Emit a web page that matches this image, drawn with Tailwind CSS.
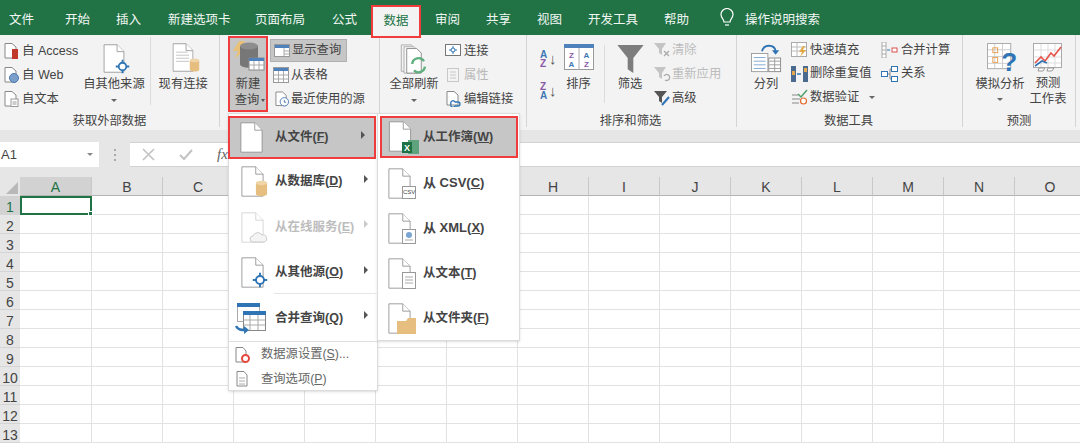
<!DOCTYPE html>
<html lang="zh">
<head>
<meta charset="UTF-8">
<title>Excel 数据</title>
<script src="https://cdn.jsdelivr.net/npm/@tailwindcss/browser@4"></script>
</head>
<body class="w-[1080px] h-[446px] overflow-hidden bg-white font-['Liberation_Sans','Noto_Sans_CJK_SC',sans-serif] text-[12.3px] text-[#444]">
<svg class="hidden">
  <symbol id="page" viewBox="0 0 28 38"><path d="M1 1H18L27 10V37H1Z" fill="#fff" stroke="#8a8a8a"/><path d="M18 1V10H27" fill="#fff" stroke="#8a8a8a"/></symbol>
  <symbol id="node" viewBox="0 0 20 20"><path d="M10 1V19M1 10H19" stroke="#2f75b5" stroke-width="2.4"/><circle cx="10" cy="10" r="5" fill="#fff" stroke="#2f75b5" stroke-width="2.4"/></symbol>
  <symbol id="cyl" viewBox="0 0 14 18"><path d="M1 3V15C1 18 13 18 13 15V3Z" fill="#e6bf80"/><ellipse cx="7" cy="3" rx="6" ry="2.4" fill="#f0d5a8"/></symbol>
</svg>

<!-- tabs -->
<nav class="h-[35px] bg-[#217346] flex items-start text-[#f2f7f4] text-[12.5px] pl-[9px] leading-[40px]">
  <span class="w-[56px]">文件</span>
  <span class="w-[51px]">开始</span>
  <span class="w-[52px]">插入</span>
  <span class="w-[87px]">新建选项卡</span>
  <span class="w-[77px]">页面布局</span>
  <span class="w-[40px]">公式</span>
  <span class="w-[50px] h-[33px] mt-[5px] bg-[#f3f3f3] border-2 border-[#f03c3c] text-[#217346] text-center leading-[28px] relative z-10 box-border -mr-[6px] -ml-[1px]">数据</span>
  <span class="w-[51px] ml-[20px]">审阅</span>
  <span class="w-[51px]">共享</span>
  <span class="w-[51px]">视图</span>
  <span class="w-[76px]">开发工具</span>
  <span class="w-[55px]">帮助</span>
  <span class="w-[26px] h-[35px] flex items-center">
    <svg width="16" height="20" viewBox="0 0 16 20" fill="none" stroke="#fff" stroke-width="1.2"><path d="M5 14C5 11 2 10 2 6.5A6 6 0 0 1 14 6.5C14 10 11 11 11 14Z"/><path d="M6 17H10"/></svg>
  </span>
  <span>操作说明搜索</span>
</nav>

<!-- ribbon -->
<section class="h-[95px] bg-[#f3f3f3] flex">
  <!-- 获取外部数据 -->
  <div class="w-[220px] h-[92px] border-r border-[#d4d4d4] flex flex-col">
    <div class="h-[76px] shrink-0 flex">
      <div class="w-[84px] pl-[4px] pt-[8px] flex flex-col gap-[8px]">
        <div class="h-[16px] flex items-center gap-[3px]">
          <svg width="15" height="16" viewBox="0 0 15 16"><path d="M1 .5H8L12 4V15H1Z" fill="#fff" stroke="#888"/><rect x="8" y="6" width="6" height="10" fill="#c0392b"/></svg>
          <span class="text-[12.5px] whitespace-nowrap">自 Access</span>
        </div>
        <div class="h-[16px] flex items-center gap-[3px]">
          <svg width="15" height="16" viewBox="0 0 15 16"><path d="M1 .5H8L12 4V15H1Z" fill="#fff" stroke="#888"/><circle cx="10" cy="11" r="4.5" fill="#7b9fca" stroke="#4a78b0"/></svg>
          <span class="text-[12.5px]">自 Web</span>
        </div>
        <div class="h-[16px] flex items-center gap-[3px]">
          <svg width="15" height="16" viewBox="0 0 15 16"><path d="M1 .5H8L12 4V15H1Z" fill="#fff" stroke="#888"/><rect x="7" y="8" width="7" height="7.5" fill="#fff" stroke="#999"/><path d="M8.5 11H12.5M8.5 13H12.5" stroke="#999"/></svg>
          <span>自文本</span>
        </div>
      </div>
      <div class="w-[68px] pr-[6px] flex flex-col items-center pt-[7px] border-r border-[#dcdcdc] h-[68px] mt-[2px]">
        <div class="relative w-[30px] h-[30px] translate-x-[4px] shrink-0">
          <svg class="w-[22px] h-[29px]"><use href="#page"/></svg>
          <svg class="absolute left-[12px] bottom-[0px] w-[15px] h-[15px]"><use href="#node"/></svg>
        </div>
        <span class="whitespace-nowrap leading-[16px] mt-[2px]">自其他来源</span>
        <span class="mt-[7px] w-0 h-0 border-x-[3px] border-x-transparent border-t-[3px] border-t-[#666]"></span>
      </div>
      <div class="w-[68px] pr-[4px] flex flex-col items-center pt-[8px]">
        <div class="relative w-[28px] h-[30px] translate-x-[3px] shrink-0">
          <svg class="w-[22px] h-[29px]" viewBox="0 0 28 38"><use href="#page"/><path d="M5 12H20M5 16H22M5 20H22M5 24H22" stroke="#b5b5b5"/></svg>
          <svg class="absolute right-0 bottom-0 w-[11px] h-[16px]"><use href="#cyl"/></svg>
        </div>
        <span class="whitespace-nowrap leading-[16px] mt-[3px]">现有连接</span>
      </div>
    </div>
    <div class="text-center leading-[16px] mt-[2px]">获取外部数据</div>
  </div>

  <!-- 获取和转换 -->
  <div class="w-[160px] h-[92px] border-r border-[#d4d4d4] flex pl-[8px] gap-[2px]">
    <div class="w-[40px] h-[76px] mt-[1px] bg-[#c6c6c6] border-2 border-[#f03c3c] flex flex-col items-center box-border">
      <svg class="mt-[2px] shrink-0" width="34" height="36" viewBox="0 0 34 36"><path d="M8 1H14L10 9H14L4 19L7 11H2Z" fill="#e8c078"/><path d="M9 6V24C9 29 27 29 27 24V6Z" fill="#777"/><ellipse cx="18" cy="6" rx="9" ry="3.5" fill="#8d8d8d"/><rect x="18" y="18" width="15" height="12" fill="#fff" stroke="#888"/><rect x="18" y="18" width="15" height="3" fill="#4f81bd"/><path d="M18 25H33M23 21V30M28 21V30" stroke="#aaa"/></svg>
      <span class="leading-[15px] mt-[1px]">新建</span>
      <span class="leading-[16px] whitespace-nowrap flex items-center gap-[2px] ml-[4px]">查询<span class="w-0 h-0 border-x-[2.5px] border-x-transparent border-t-[3px] border-t-[#555]"></span></span>
    </div>
    <div class="pt-[4px] flex flex-col">
      <div class="w-[77px] h-[23px] bg-[#c6c6c6] border border-[#b0b0b0] flex items-center gap-[2px] pl-[3px] whitespace-nowrap">
        <svg width="16" height="13" viewBox="0 0 16 13"><rect x=".5" y=".5" width="15" height="12" fill="#fff" stroke="#999"/><rect x="1" y="1" width="14" height="3" fill="#4f81bd"/><path d="M10 4V12M10 7H15M10 10H15" stroke="#aaa"/></svg>
        <span>显示查询</span>
      </div>
      <div class="h-[24px] mt-[1px] flex items-center gap-[2px] pl-[3px]">
        <svg width="16" height="16" viewBox="0 0 16 16"><rect x=".5" y=".5" width="15" height="15" fill="#fff" stroke="#999"/><rect x="1" y="1" width="14" height="3" fill="#4f81bd"/><path d="M1 8H15M1 12H15M5.5 4V15M10.5 4V15" stroke="#aaa"/></svg>
        <span>从表格</span>
      </div>
      <div class="h-[24px] flex items-center gap-[2px] pl-[5px] whitespace-nowrap">
        <svg width="14" height="16" viewBox="0 0 15 16"><path d="M1 .5H8L12 4V15H1Z" fill="#fff" stroke="#888"/><circle cx="10" cy="11" r="4.5" fill="#fff" stroke="#4a78b0"/><path d="M10 9V11.5H12" fill="none" stroke="#4a78b0"/></svg>
        <span>最近使用的源</span>
      </div>
    </div>
  </div>

  <!-- 连接 -->
  <div class="w-[147px] h-[92px] border-r border-[#d4d4d4] flex pt-[8px]">
    <div class="w-[66px] pl-[2px] flex flex-col items-center">
      <svg class="shrink-0 mt-[1px]" width="32" height="30" viewBox="0 0 34 33"><path d="M3 1H14L18 5V30H3Z" fill="#f2f2f2" stroke="#aaa"/><path d="M6 3H17L21 7V32H6Z" fill="#f8f8f8" stroke="#aaa"/><path d="M9 5H20L25 10V32H9Z" fill="#fff" stroke="#888"/><path d="M15 22A7 7 0 0 1 28 19M29 25A7 7 0 0 1 17 29" fill="none" stroke="#5fae7e" stroke-width="2.6"/></svg>
      <span class="leading-[16px] mt-[2px] whitespace-nowrap">全部刷新</span>
      <span class="mt-[7px] w-0 h-0 border-x-[3px] border-x-transparent border-t-[3px] border-t-[#666]"></span>
    </div>
    <div class="flex flex-col gap-[8px] -ml-[1px]">
      <div class="h-[16px] flex items-center gap-[3px]">
        <svg width="16" height="14" viewBox="0 0 16 14"><rect x=".5" y=".5" width="15" height="11" fill="#fff" stroke="#777"/><path d="M8 2V10M4 6H12" stroke="#2f75b5"/><circle cx="8" cy="6" r="2" fill="#fff" stroke="#2f75b5"/></svg>
        <span>连接</span>
      </div>
      <div class="h-[16px] flex items-center gap-[3px] text-[#b8b8b8]">
        <svg width="16" height="16" viewBox="0 0 16 16" fill="none" stroke="#c8c8c8"><rect x="2.5" y="1.5" width="11" height="13"/><path d="M5 5H11M5 8H11M5 11H11"/></svg>
        <span>属性</span>
      </div>
      <div class="h-[16px] flex items-center gap-[3px] whitespace-nowrap">
        <svg width="16" height="16" viewBox="0 0 16 16"><path d="M2 .5H9L13 4V14H2Z" fill="#fff" stroke="#888"/><path d="M6 13A2 2 0 0 1 10 11H13A2 2 0 0 1 13 15H10A2 2 0 0 1 6 13Z" fill="none" stroke="#2f75b5" stroke-width="1.3"/></svg>
        <span>编辑链接</span>
      </div>
    </div>
  </div>

  <!-- 排序和筛选 -->
  <div class="w-[210px] h-[92px] border-r border-[#d4d4d4] flex flex-col">
    <div class="h-[76px] shrink-0 flex pt-[8px]">
      <div class="w-[36px] pl-[13px] pt-[7px] flex flex-col gap-[14px] shrink-0 text-[10px] font-bold leading-[9px]">
        <span class="relative text-[#3f78b5]">A<br><span class="text-[#8a5aa8]">Z</span><span class="absolute left-[9px] top-0 font-normal text-[#555] text-[15px] leading-[18px]">↓</span></span>
        <span class="relative text-[#8a5aa8]">Z<br><span class="text-[#3f78b5]">A</span><span class="absolute left-[9px] top-0 font-normal text-[#555] text-[15px] leading-[18px]">↓</span></span>
      </div>
      <div class="w-[31px] flex flex-col items-center shrink-0">
        <svg width="30" height="27" viewBox="0 0 30 27" class="shrink-0 mt-[1px]"><rect x=".5" y=".5" width="29" height="25" fill="#fff" stroke="#999"/><rect x="0" y="0" width="30" height="4" fill="#4f81bd"/><path d="M15 4V26" stroke="#aaa"/><text x="7.5" y="14" text-anchor="middle" font-size="8" font-weight="700" fill="#8a5aa8">Z</text><text x="7.5" y="23" text-anchor="middle" font-size="8" font-weight="700" fill="#3f78b5">A</text><text x="22.5" y="14" text-anchor="middle" font-size="8" font-weight="700" fill="#3f78b5">A</text><text x="22.5" y="23" text-anchor="middle" font-size="8" font-weight="700" fill="#8a5aa8">Z</text></svg>
        <span class="leading-[16px] mt-[5px] whitespace-nowrap">排序</span>
      </div>
      <div class="w-px h-[58px] bg-[#dcdcdc] ml-[10px] mt-[2px] shrink-0"></div>
      <div class="w-[50px] flex flex-col items-center shrink-0">
        <svg width="29" height="30" viewBox="0 0 30 32" class="mt-[1px] shrink-0"><path d="M1 1H29L18 15V31L12 27V15Z" fill="#7d7d7d"/></svg>
        <span class="leading-[16px] mt-[2px] whitespace-nowrap">筛选</span>
      </div>
      <div class="flex flex-col gap-[8px] whitespace-nowrap -mt-[1px] -ml-[2px]">
        <div class="h-[16px] flex items-center gap-[1px] text-[#bcbcbc]">
          <svg width="18" height="16" viewBox="0 0 18 16"><path d="M1 1H13L9 7V13L6 11V7Z" fill="#c4c4c4"/><path d="M11 9L16 14M16 9L11 14" stroke="#aaa" stroke-width="1.3"/></svg>
          <span>清除</span>
        </div>
        <div class="h-[16px] flex items-center gap-[1px] text-[#bcbcbc]">
          <svg width="18" height="16" viewBox="0 0 18 16"><path d="M1 1H13L9 7V13L6 11V7Z" fill="#c4c4c4"/><path d="M11 10A3 3 0 1 1 12 14" fill="none" stroke="#aaa" stroke-width="1.3"/></svg>
          <span>重新应用</span>
        </div>
        <div class="h-[16px] flex items-center gap-[1px]">
          <svg width="18" height="16" viewBox="0 0 18 16"><path d="M1 1H14L9 7V13L6 11V7Z" fill="#555"/><path d="M9 15L16 7" stroke="#2f75b5" stroke-width="2"/></svg>
          <span>高级</span>
        </div>
      </div>
    </div>
    <div class="text-center leading-[16px] mt-[2px] -translate-x-[1px]">排序和筛选</div>
  </div>

  <!-- 数据工具 -->
  <div class="w-[226px] h-[92px] border-r border-[#d4d4d4] flex flex-col">
    <div class="h-[76px] shrink-0 flex pt-[8px]">
      <div class="w-[52px] flex flex-col items-center shrink-0 pl-[6px]">
        <svg width="33" height="30" viewBox="0 0 34 33" class="shrink-0"><path d="M12 9C14 1 26 1 27 9" fill="none" stroke="#2f75b5" stroke-width="2"/><path d="M23 8L27 13L31 8Z" fill="#2f75b5"/><rect x=".5" y="11.5" width="18" height="20" fill="#fff" stroke="#999"/><path d="M3 16H16M3 20H16M3 24H16M3 28H16" stroke="#7aa5d2"/><rect x="19.5" y="16.5" width="13" height="15" fill="#fff" stroke="#888"/><path d="M20 20H32M20 24H32M20 28H32M26 17V31" stroke="#999"/></svg>
        <span class="leading-[16px] mt-[3px] whitespace-nowrap">分列</span>
      </div>
      <div class="w-[90px] flex flex-col gap-[7.5px] whitespace-nowrap shrink-0 -mt-[1px] ml-[2px]">
        <div class="h-[16px] flex items-center gap-[2px]">
          <svg width="17" height="16" viewBox="0 0 17 16"><rect x=".5" y=".5" width="15" height="14" fill="#fff" stroke="#aaa"/><path d="M1 5H15M1 9H15M6 1V14" stroke="#bbb"/><path d="M12 4L8 10H11L9 15L15 8H12L14 4Z" fill="#e0a945"/></svg>
          <span>快速填充</span>
        </div>
        <div class="h-[16px] flex items-center gap-[2px]">
          <svg width="17" height="16" viewBox="0 0 17 16"><rect x="0" y="0" width="5" height="16" fill="#4a6a8f"/><rect x="1" y="5" width="3" height="4" fill="#e6a84c"/><rect x="12" y="0" width="5" height="16" fill="#4a6a8f"/><rect x="13" y="2" width="3" height="4" fill="#e6a84c"/><path d="M6 8H10" stroke="#2f75b5" stroke-width="1.5"/></svg>
          <span>删除重复值</span>
        </div>
        <div class="h-[16px] flex items-center gap-[2px]">
          <svg width="17" height="16" viewBox="0 0 17 16"><path d="M7 5L10 8L16 1" fill="none" stroke="#4fa06a" stroke-width="1.5"/><path d="M1 6H7M1 10H9M1 14H8" stroke="#888"/><circle cx="12.5" cy="12" r="3" fill="#fff" stroke="#e26a2c" stroke-width="1.2"/></svg>
          <span>数据验证</span>
          <span class="ml-[8px] w-0 h-0 border-x-[3px] border-x-transparent border-t-[3px] border-t-[#666]"></span>
        </div>
      </div>
      <div class="flex flex-col gap-[7.5px] whitespace-nowrap -mt-[1px]">
        <div class="h-[16px] flex items-center gap-[3px]">
          <svg width="17" height="16" viewBox="0 0 17 16"><rect x="1" y="0" width="4" height="16" fill="#fff" stroke="#999" stroke-width=".8"/><path d="M1 4H5M1 8H5M1 12H5" stroke="#999" stroke-width=".8"/><path d="M6 8H9" stroke="#2f75b5"/><rect x="11" y="6" width="5" height="4" fill="#fff" stroke="#d9534f"/></svg>
          <span>合并计算</span>
        </div>
        <div class="h-[16px] flex items-center gap-[3px]">
          <svg width="17" height="16" viewBox="0 0 17 16" fill="#fff" stroke="#2f75b5"><rect x=".5" y="5.5" width="6" height="5"/><rect x="10.5" y=".5" width="6" height="5"/><rect x="10.5" y="10.5" width="6" height="5"/><path d="M7 8H9M9 3V13M9 3H10M9 13H10" fill="none" stroke="#888"/></svg>
          <span>关系</span>
        </div>
      </div>
    </div>
    <div class="text-center leading-[16px] mt-[2px] -translate-x-[1px]">数据工具</div>
  </div>

  <!-- 预测 -->
  <div class="w-[113px] h-[92px] border-r border-[#d4d4d4] flex flex-col">
    <div class="h-[76px] shrink-0 flex pt-[8px]">
      <div class="w-[60px] ml-[7px] flex flex-col items-center shrink-0">
        <svg width="31" height="30" viewBox="0 0 32 31" class="shrink-0 translate-x-[2px] overflow-visible"><rect x=".5" y=".5" width="24" height="26" fill="#fff" stroke="#aaa"/><path d="M1 7H24M1 14H24M1 21H24M8 1V26M16 1V26" stroke="#ccc"/><rect x="6" y="5" width="5" height="5" fill="none" stroke="#e8a050"/><rect x="6" y="15" width="5" height="5" fill="none" stroke="#e8a050"/><text x="23" y="29" text-anchor="middle" font-size="27" font-weight="700" font-family="Liberation Sans" fill="#2f75b5">?</text></svg>
        <span class="leading-[16px] mt-[3px] whitespace-nowrap">模拟分析</span>
        <span class="mt-[6px] w-0 h-0 border-x-[3px] border-x-transparent border-t-[3px] border-t-[#666]"></span>
      </div>
      <div class="w-[36px] flex flex-col items-center shrink-0">
        <svg width="30" height="30" viewBox="0 0 30 30" class="shrink-0"><rect x=".5" y=".5" width="28" height="24" fill="#fff" stroke="#aaa"/><path d="M1 7H28M1 14H28M1 20H28M8 1V24M15 1V24M22 1V24" stroke="#ddd"/><path d="M2 20L8 14L12 18L18 10L21 13L28 4" fill="none" stroke="#e5534b" stroke-width="1.6"/><path d="M2 23L9 18L14 20" fill="none" stroke="#2f75b5" stroke-width="1.6"/><path d="M6 25H12L10 28H5ZM15 25H21L19 28H14Z" fill="#fff" stroke="#999"/></svg>
        <span class="leading-[15px] mt-[3px] whitespace-nowrap">预测</span>
        <span class="leading-[16px] whitespace-nowrap">工作表</span>
      </div>
    </div>
    <div class="text-center leading-[16px] mt-[2px]">预测</div>
  </div>
</section>

<!-- formula bar -->
<section class="h-[47px] bg-[#e6e6e6] pt-[12px] flex items-start">
  <div class="w-[99px] h-[25px] bg-white flex items-center justify-between pl-[1px] pr-[6px] text-[13px]">
    <span>A1</span>
    <span class="w-0 h-0 border-x-[3px] border-x-transparent border-t-[3px] border-t-[#888]"></span>
  </div>
  <div class="w-[31px] h-[25px] flex flex-col items-center justify-center gap-[3px]">
    <span class="size-[2px] bg-[#aaa]"></span><span class="size-[2px] bg-[#aaa]"></span><span class="size-[2px] bg-[#aaa]"></span>
  </div>
  <div class="flex-1 h-[25px] bg-white border-y border-[#d2d2d2] flex items-center pl-[12px] gap-[24px]">
    <svg width="13" height="13" viewBox="0 0 13 13" stroke="#c2c2c2" stroke-width="1.6"><path d="M1 1L12 12M12 1L1 12"/></svg>
    <svg width="14" height="12" viewBox="0 0 14 12" fill="none" stroke="#c2c2c2" stroke-width="2"><path d="M1 6L5 10L13 1"/></svg>
    <span class="font-['Liberation_Serif',serif] italic text-[15px] text-[#666]">fx</span>
  </div>
</section>

<!-- sheet -->
<section id="sheet" class="grid grid-cols-[20px_72px_repeat(14,71px)] grid-rows-[19px_repeat(13,19px)] relative"></section>

<!-- 新建查询 menu -->
<div class="absolute left-[228px] top-[113px] z-20 flex items-start">
  <div class="w-[150px] h-[278px] bg-white border border-[#dcdcdc] shadow-sm flex flex-col font-bold text-[12.5px]">
    <div class="h-[43px] shrink-0 mt-[2px] -ml-px w-[148px] bg-[#c6c6c6] border-2 border-[#f03c3c] flex items-center">
      <svg class="ml-[10px] w-[23px] h-[31px] shrink-0"><use href="#page"/></svg>
      <span class="ml-[12px] flex-1">从文件(<span class="underline">F</span>)</span>
      <span class="w-0 h-0 border-y-[4px] border-y-transparent border-l-[4px] border-l-[#555] mr-[9px] -mt-[6px]"></span>
    </div>
    <div class="h-[45.5px] shrink-0 flex items-center">
      <span class="relative ml-[12px] w-[27px] h-[31px] shrink-0"><svg class="w-[23px] h-[31px]"><use href="#page"/></svg><svg class="absolute right-0 bottom-0 w-[13px] h-[17px]"><use href="#cyl"/></svg></span>
      <span class="ml-[7px] flex-1">从数据库(<span class="underline">D</span>)</span>
      <span class="w-0 h-0 border-y-[4px] border-y-transparent border-l-[4px] border-l-[#555] mr-[9px] -mt-[6px]"></span>
    </div>
    <div class="h-[45.5px] shrink-0 flex items-center text-[#bdbdbd]">
      <span class="relative ml-[12px] w-[27px] h-[31px] shrink-0"><svg class="w-[23px] h-[31px] opacity-40"><use href="#page"/></svg><svg class="absolute right-0 bottom-0" width="19" height="12" viewBox="0 0 19 12"><path d="M4 11A3 3 0 0 1 4 5A5 5 0 0 1 13 4A3.5 3.5 0 0 1 15 11Z" fill="#f4f4f4" stroke="#ccc"/></svg></span>
      <span class="ml-[7px] flex-1">从在线服务(<span class="underline">E</span>)</span>
      <span class="w-0 h-0 border-y-[4px] border-y-transparent border-l-[4px] border-l-[#ccc] mr-[9px] -mt-[6px]"></span>
    </div>
    <div class="h-[45.5px] shrink-0 flex items-center">
      <span class="relative ml-[12px] w-[27px] h-[31px] shrink-0"><svg class="w-[23px] h-[31px]"><use href="#page"/></svg><svg class="absolute right-0 bottom-0 w-[16px] h-[16px]"><use href="#node"/></svg></span>
      <span class="ml-[7px] flex-1">从其他源(<span class="underline">O</span>)</span>
      <span class="w-0 h-0 border-y-[4px] border-y-transparent border-l-[4px] border-l-[#555] mr-[9px] -mt-[6px]"></span>
    </div>
    <div class="h-[45px] shrink-0 flex items-center relative">
      <span class="absolute left-[45px] right-0 -top-[3px] h-px bg-[#e6e6e6]"></span>
      <svg class="ml-[6px] shrink-0" width="32" height="32" viewBox="0 0 32 32"><rect x="2.5" y="1.5" width="22" height="18" fill="#fff" stroke="#aaa"/><rect x="2" y="1" width="23" height="4" fill="#2f75b5"/><rect x="8.5" y="9.5" width="22" height="19" fill="#fff" stroke="#888"/><rect x="8" y="9" width="23" height="4" fill="#2f75b5"/><path d="M9 18H30M9 23H30M15 13V28M23 13V28" stroke="#aaa"/><path d="M1 24C3 28 6 28 11 28" fill="none" stroke="#2f75b5" stroke-width="2.4"/><path d="M9 24L14 28L9 32Z" fill="#2f75b5"/></svg>
      <span class="ml-[8px] flex-1">合并查询(<span class="underline">Q</span>)</span>
      <span class="w-0 h-0 border-y-[4px] border-y-transparent border-l-[4px] border-l-[#555] mr-[9px] -mt-[6px]"></span>
    </div>
    <div class="border-t border-[#e0e0e0] pt-[1px] text-[#666] font-normal text-[12.3px]">
      <div class="h-[24px] flex items-center">
        <svg class="ml-[6px]" width="15" height="16" viewBox="0 0 15 16"><path d="M1 .5H8L11 4V15H1Z" fill="#fff" stroke="#888"/><circle cx="10.5" cy="11.5" r="3.5" fill="#fff" stroke="#e5483f" stroke-width="2"/></svg>
        <span class="ml-[11px] whitespace-nowrap">数据源设置(<span class="underline">S</span>)...</span>
      </div>
      <div class="h-[25px] flex items-center">
        <svg class="ml-[6px]" width="15" height="16" viewBox="0 0 15 16" fill="#fff" stroke="#888"><path d="M2 .5H9L12 4V15H2Z"/><path d="M4 7H10M4 10H10M4 13H10" stroke="#aaa"/></svg>
        <span class="ml-[11px] whitespace-nowrap">查询选项(<span class="underline">P</span>)</span>
      </div>
    </div>
  </div>

  <!-- 从文件 submenu -->
  <div class="w-[143px] h-[228px] -ml-px bg-white border border-[#dcdcdc] shadow-sm flex flex-col font-bold text-[12.5px]">
    <div class="h-[42px] shrink-0 mt-[2px] ml-[2px] w-[138px] bg-[#c6c6c6] border-2 border-[#f03c3c] flex items-center">
      <span class="relative ml-[6px] w-[31px] h-[33px] shrink-0"><svg class="w-[24px] h-[31px]"><use href="#page"/></svg><svg class="absolute right-0 bottom-0" width="17" height="14" viewBox="0 0 17 14"><rect x="6" y="0" width="11" height="14" fill="#5fa37e"/><rect x="0" y="2" width="10" height="11" fill="#1e7145"/><text x="5" y="11" text-anchor="middle" font-size="9" font-weight="700" fill="#fff" font-family="Liberation Sans">X</text></svg></span>
      <span class="ml-[4px] whitespace-nowrap">从工作簿(<span class="underline">W</span>)</span>
    </div>
    <div class="h-[45px] shrink-0 mt-[2.5px] flex items-center">
      <span class="relative ml-[10px] w-[28px] h-[31px] shrink-0"><svg class="w-[23px] h-[31px]"><use href="#page"/></svg><span class="absolute right-0 bottom-0 w-[14px] h-[13px] bg-white border border-[#999] text-[6px] leading-[11px] text-center font-normal">CSV</span></span>
      <span class="ml-[7px] whitespace-nowrap text-[13px]">从 CSV(<span class="underline">C</span>)</span>
    </div>
    <div class="h-[45px] shrink-0 flex items-center">
      <span class="relative ml-[10px] w-[28px] h-[31px] shrink-0"><svg class="w-[23px] h-[31px]"><use href="#page"/></svg><svg class="absolute right-0 bottom-0" width="14" height="15" viewBox="0 0 14 15"><rect x=".5" y=".5" width="13" height="14" fill="#fff" stroke="#999"/><circle cx="7" cy="6" r="3" fill="#7aa5d2"/><path d="M3 11H11" stroke="#aaa"/></svg></span>
      <span class="ml-[7px] whitespace-nowrap text-[13px]">从 XML(<span class="underline">X</span>)</span>
    </div>
    <div class="h-[45px] shrink-0 flex items-center">
      <span class="relative ml-[10px] w-[28px] h-[31px] shrink-0"><svg class="w-[23px] h-[31px]"><use href="#page"/></svg><svg class="absolute right-0 bottom-0" width="14" height="17" viewBox="0 0 14 17"><rect x=".5" y=".5" width="13" height="16" fill="#fff" stroke="#999"/><path d="M3 5H11M3 8H11M3 11H11" stroke="#aaa"/></svg></span>
      <span class="ml-[7px] whitespace-nowrap">从文本(<span class="underline">T</span>)</span>
    </div>
    <div class="h-[45px] shrink-0 flex items-center">
      <span class="relative ml-[10px] w-[28px] h-[31px] shrink-0"><svg class="w-[23px] h-[31px]"><use href="#page"/></svg><svg class="absolute right-0 bottom-0" width="19" height="16" viewBox="0 0 19 16"><path d="M0 3H9L11 0H19V16H0Z" fill="#e6bf80"/></svg></span>
      <span class="ml-[7px] whitespace-nowrap">从文件夹(<span class="underline">F</span>)</span>
    </div>
  </div>
</div>

<script>
  // worksheet cells; D-G headers sit behind the open menus
  const sheet = document.getElementById("sheet");
  const headCls = "bg-[#e6e6e6] border-r border-b border-r-[#c8c8c8] border-b-[#b4b4b4] text-center text-[14px] leading-[21px] text-[#444]";
  const rowCls = "bg-[#e6e6e6] border-b border-[#d4d4d4] text-center text-[14px] leading-[23px] text-[#444]";
  const cellCls = "bg-white border-r border-b border-[#e2e2e2]";
  const cols = ["A", "B", "C", "", "", "", "", "H", "I", "J", "K", "L", "M", "N", "O"];
  let html = `<div class="bg-[#e6e6e6] flex items-end justify-end pr-[2px] pb-[2px]"><span class="w-0 h-0 border-b-[12px] border-b-[#b8b8b8] border-l-[12px] border-l-transparent"></span></div>`;
  cols.forEach((c, i) => {
    const cls = i === 0 ? "bg-[#d2d2d2] text-[#217346] text-center text-[14px] leading-[21px] border-r border-b border-r-[#c8c8c8] border-b-[#b4b4b4]" : headCls;
    html += `<div class="${cls}">${c}</div>`;
  });
  for (let r = 1; r <= 13; r++) {
    const rh = r === 1 ? "bg-[#d2d2d2] text-[#217346] border-b border-[#d4d4d4] text-center text-[14px] leading-[23px]" : rowCls;
    html += `<div class="${rh}">${r}</div>`;
    cols.forEach((c, i) => {
      if (r === 1 && i === 0) {
        html += `<div class="relative bg-white border-2 border-[#217346]"><span class="absolute -right-[3px] -bottom-[3px] size-[5px] bg-[#217346] border border-white"></span></div>`;
      } else {
        html += `<div class="${cellCls}"></div>`;
      }
    });
  }
  sheet.innerHTML = html;
</script>
</body>
</html>
